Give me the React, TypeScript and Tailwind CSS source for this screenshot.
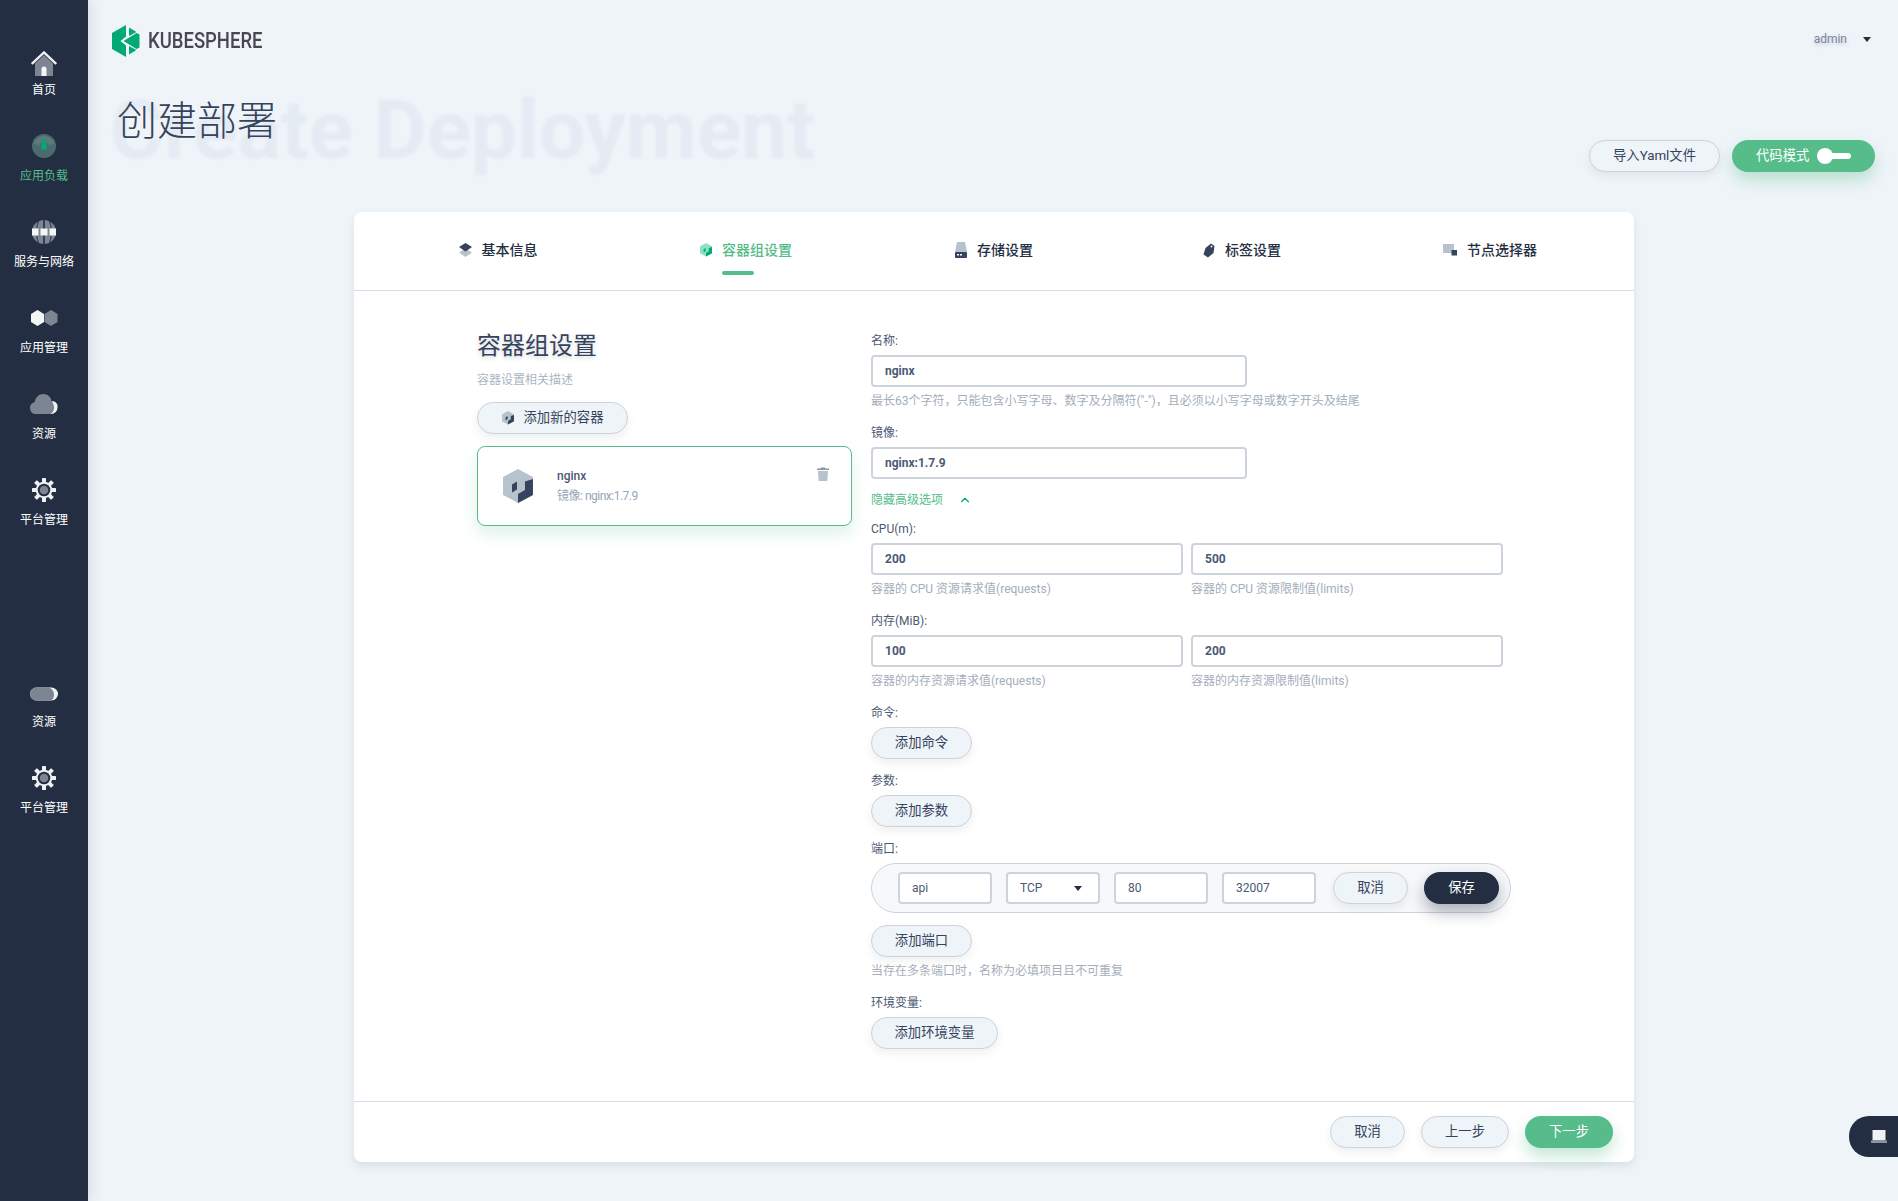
import { ChevronUp } from "lucide-react";
import type { ReactNode } from "react";

function HomeIcon() {
  return (
    <svg width="26" height="26" viewBox="0 0 26 26" className="translate-y-1">
      <path d="M4 12.5 13 4l9 8.500V25H4z" fill="#7e8592" />
      <path d="M0.800 13 13 1.500 25.200 13" fill="none" stroke="#f0f1f3" strokeWidth="2.400" />
      <path d="M10.500 25v-7a2.500 2.500 0 0 1 5 0v7z" fill="#f4f5f6" />
    </svg>
  );
}

function GaugeIcon() {
  return (
    <svg width="24" height="24" viewBox="0 0 24 24">
      <circle cx="12" cy="12" r="12" fill="#4a6b6f" />
      <path d="M1.500 9.500a11 11 0 0 1 21 0l-5.500 2a5.500 5.500 0 0 0-10 0z" fill="#5b7a7d" />
      <path d="M12 3.500c1 3 2.800 6.500 2.800 9.500a2.800 2.800 0 0 1-5.600 0c0-3 1.800-6.500 2.800-9.500z" fill="#00aa72" />
    </svg>
  );
}

function GlobeIcon() {
  return (
    <svg width="24" height="24" viewBox="0 0 24 24">
      <circle cx="12" cy="12" r="12" fill="#7e8592" />
      <path d="M11.200 0h1.600v24h-1.600z" fill="#242e42" />
      <path d="M7 0.500C5.600 3 5 5.500 5 8M17 0.500C18.400 3 19 5.500 19 8M7 23.500C5.600 21 5 18.500 5 16M17 23.500C18.400 21 19 18.500 19 16" stroke="#242e42" strokeWidth="1" fill="none" />
      <path d="M0 8.500h6.500v7H0zM8.500 8.500h7v7h-7zM17.500 8.500H24v7h-6.500z" fill="#f4f5f6" />
    </svg>
  );
}

function HexIcon() {
  return (
    <svg width="28" height="16" viewBox="0 0 28 16">
      <path d="M21 0l6.500 4v8L21 16l-6.500-4V4z" fill="#7e8592" />
      <path d="M7.500 0 14 4v8l-6.500 4L1 12V4z" fill="#f4f5f6" />
    </svg>
  );
}

function CloudIcon() {
  return (
    <svg width="28" height="20" viewBox="0 0 28 20">
      <path d="M21 7.500A5 5 0 0 1 27.500 13a6.500 6.500 0 0 1-6.500 7h-3c3 0 5.500-2 5.500-6 0-2.500-1-5-2.500-6.500z" fill="#f0f1f3" />
      <path d="M6 20a6 6 0 0 1-1.500-11.800C5.500 3.300 9 0 13.500 0c4 0 7.500 3 8 7 1.500 1.500 2.500 4 2.500 6.500 0 4-2.500 6.500-6 6.500z" fill="#7e8592" />
    </svg>
  );
}

function PillIcon() {
  return (
    <svg width="28" height="14" viewBox="0 0 28 14" className="translate-y-0.5">
      <rect x="0" y="0.500" width="28" height="13" rx="6.500" fill="#f0f1f3" />
      <path d="M6.500 0.500h13c3 2 4.500 4 4.500 7 0 2.500-1 4.500-2.500 6h-15a6.500 6.500 0 0 1 0-13z" fill="#7e8592" />
    </svg>
  );
}

function GearIcon() {
  return (
    <svg width="24" height="24" viewBox="0 0 24 24">
      <g fill="#f0f1f3">
        <rect x="10" y="0" width="4" height="24" rx="0.500" />
        <rect x="10" y="0" width="4" height="24" rx="0.500" transform="rotate(45 12 12)" />
        <rect x="10" y="0" width="4" height="24" rx="0.500" transform="rotate(90 12 12)" />
        <rect x="10" y="0" width="4" height="24" rx="0.500" transform="rotate(135 12 12)" />
      </g>
      <circle cx="12" cy="12" r="8.300" fill="#f0f1f3" />
      <circle cx="12" cy="12" r="6.300" fill="#242e42" />
      <circle cx="12" cy="12" r="4.300" fill="#7e8592" />
    </svg>
  );
}

function CubeIcon({ size = 30, dark = "#36435c", light = "#b6c2cd" }: { size?: number; dark?: string; light?: string }) {
  return (
    <svg width={size} height={size * 1.130} viewBox="0 0 30 34">
      <path d="M15 0 30 8v18l-15 8L0 26V8z" fill={light} />
      <path d="M30 10v16l-15 8V25l7-4v-8.500z" fill={dark} />
      <path d="M9 15.500l5-3v8l-5 3z" fill={dark} />
    </svg>
  );
}

function LayersIcon() {
  return (
    <svg width="13" height="16" viewBox="0 0 13 16">
      <path d="M6.500 6.500 13 10.500 6.500 15 0 10.500z" fill="#b6c2cd" />
      <path d="M6.500 1 13 5 6.500 9.500 0 5z" fill="#36435c" />
    </svg>
  );
}

function DiskIcon() {
  return (
    <svg width="12" height="16" viewBox="0 0 12 16">
      <path d="M2 0h8l2 10H0z" fill="#b6c2cd" />
      <rect x="0" y="10" width="12" height="6" rx="1" fill="#36435c" />
      <path d="M2 12h2v1.500H2zM5 12h2v1.500H5z" fill="#fff" />
    </svg>
  );
}

function TagIcon() {
  return (
    <svg width="12" height="15" viewBox="0 0 12 15">
      <path d="M8 0.500 11.500 3l-1 7L5 14.500 0.500 11.500 2.500 5z" fill="#36435c" />
      <circle cx="8.500" cy="3.500" r="0.900" fill="#fff" />
    </svg>
  );
}

function NodeIcon() {
  return (
    <svg width="14" height="12" viewBox="0 0 14 12">
      <rect x="0" y="0" width="11" height="9" fill="#b6c2cd" />
      <rect x="8.500" y="6" width="5.500" height="5.500" fill="#36435c" />
    </svg>
  );
}

function TrashIcon() {
  return (
    <svg width="12" height="14" viewBox="0 0 12 14">
      <path d="M4 0.500h4l0.500 1H12v1.500H0V1.500h3.500z" fill="#8b97a8" />
      <path d="M1 4h10l-0.700 10H1.700z" fill="#b6c2cd" />
    </svg>
  );
}

function Logo() {
  return (
    <svg width="28" height="32" viewBox="0 0 28 32">
      <path d="M0 8 14 0v11.500L8.500 16l5.500 4.500V32L0 24z" fill="#00aa72" />
      <path d="M17 2.500 24.500 7 17 11zM17 21l7.500 4L17 29.500z" fill="#00aa72" />
      <path d="M27.500 9.500v13l-3 1.500L11.500 16l13-8z" fill="#00aa72" />
    </svg>
  );
}

function NavItem({ icon, label, active }: { icon: ReactNode; label: string; active?: boolean }) {
  return (
    <div className="flex h-[86px] flex-col items-center">
      <div className="flex h-6 items-center justify-center">{icon}</div>
      <span className={`mt-2 text-xs leading-5 ${active ? "text-[#55bc8a]" : "text-white"}`}>{label}</span>
    </div>
  );
}

function Button({ children, className = "" }: { children: ReactNode; className?: string }) {
  return (
    <button type="button" className={`flex h-8 items-center justify-center rounded-2xl border border-[#ccd3db] bg-[#eff4f9] text-[13.33px] text-[#36435c] shadow-[0_4px_8px_rgba(36,46,66,0.08)] ${className}`}>
      {children}
    </button>
  );
}

function GreenButton({ children, className = "" }: { children: ReactNode; className?: string }) {
  return (
    <button type="button" className={`flex h-8 items-center rounded-2xl bg-[#55bc8a] text-[13.33px] text-white shadow-[0_8px_16px_rgba(85,188,138,0.36)] ${className}`}>
      {children}
    </button>
  );
}

function Label({ children }: { children: ReactNode }) {
  return <div className="mb-1 h-5 text-xs leading-5 text-[#4a5974]">{children}</div>;
}

function Help({ children }: { children: ReactNode }) {
  return <div className="mt-1 h-5 text-xs leading-5 text-[#a3aebb]">{children}</div>;
}

function Input({ value, className = "" }: { value: string; className?: string }) {
  return (
    <input readOnly value={value} className={`h-8 rounded border-2 border-[#ccd3db] bg-white pl-3 text-xs font-bold text-[#4a5974] outline-none ${className}`} />
  );
}

function PortInput({ value }: { value: string }) {
  return (
    <input readOnly value={value} className="h-8 w-[94px] rounded border-2 border-[#ccd3db] bg-white pl-3 text-xs text-[#4a5974] outline-none" />
  );
}

const tabs = [
  { label: "基本信息", icon: <LayersIcon /> },
  { label: "容器组设置", icon: <CubeIcon size={12} dark="#00aa72" light="#90e0c5" />, active: true },
  { label: "存储设置", icon: <DiskIcon /> },
  { label: "标签设置", icon: <TagIcon /> },
  { label: "节点选择器", icon: <NodeIcon /> },
];

export default function App() {
  return (
    <div className="relative flex h-screen overflow-hidden bg-[#eff4f9] font-['Roboto','Noto_Sans_CJK_SC',sans-serif]">
      <aside className="z-10 w-[88px] shrink-0 bg-[#242e42] pt-12 shadow-[4px_0_12px_rgba(36,46,66,0.1)]">
        <NavItem icon={<HomeIcon />} label="首页" />
        <NavItem icon={<GaugeIcon />} label="应用负载" active />
        <NavItem icon={<GlobeIcon />} label="服务与网络" />
        <NavItem icon={<HexIcon />} label="应用管理" />
        <NavItem icon={<CloudIcon />} label="资源" />
        <NavItem icon={<GearIcon />} label="平台管理" />
        <div className="mt-[116px]">
          <NavItem icon={<PillIcon />} label="资源" />
          <NavItem icon={<GearIcon />} label="平台管理" />
        </div>
      </aside>

      <main className="min-w-0 flex-1">
        <header className="flex h-[92px] items-start justify-between pl-6 pr-[27px] pt-[25px]">
          <div className="flex items-center">
            <Logo />
            <span className="ml-2 origin-left scale-x-[0.84] text-[22px] font-medium leading-8 text-[#4a4553]">KUBESPHERE</span>
          </div>
          <div className="mt-1 flex items-center">
            <span className="text-xs leading-5 text-[#79879c] [text-shadow:0_2px_4px_rgba(36,46,66,0.2)]">admin</span>
            <span className="ml-4 h-0 w-0 border-x-[4.5px] border-t-[5px] border-x-transparent border-t-[#242e42]" />
          </div>
        </header>

        <div className="flex h-[120px] items-start justify-between pl-[29px] pr-[23px]">
          <div className="relative">
            <span className="absolute left-[-7px] top-[-17px] whitespace-nowrap text-[82px] font-bold leading-[110px] text-[#e5ebf3] blur-[1px]">Create Deployment</span>
            <h1 className="relative text-[40px] font-light leading-[60px] text-[#36435c]">创建部署</h1>
          </div>
          <div className="mt-12 flex gap-3">
            <Button className="w-[131px]">导入Yaml文件</Button>
            <GreenButton className="w-[143px] pl-6">
              代码模式
              <span className="ml-2 h-4 w-4 rounded-full bg-white" />
              <span className="ml-[-2px] h-1.5 w-[20px] rounded-r-full bg-white" />
            </GreenButton>
          </div>
        </div>

        <section className="ml-[266px] flex h-[950px] w-[1280px] flex-col rounded-lg bg-white shadow-[0_4px_8px_rgba(36,46,66,0.1)]">
          <div className="grid h-[79px] shrink-0 grid-cols-5 border-b border-[#d5dee7] px-5">
            {tabs.map((tab) => (
              <div key={tab.label} className="relative flex items-center justify-center pb-0.5">
                <div className={`relative flex items-center gap-[10px] text-sm font-medium ${tab.active ? "text-[#55bc8a]" : "text-[#242e42]"}`}>
                  {tab.icon}
                  <span className="relative">
                    {tab.label}
                    {tab.active && <span className="absolute left-0 top-[31px] h-1 w-8 rounded-sm bg-[#55bc8a]" />}
                  </span>
                </div>
              </div>
            ))}
          </div>

          <div className="flex min-h-0 flex-1 gap-[19px] pl-[123px]">
            <div className="w-[375px] shrink-0 pt-[39px]">
              <h2 className="text-2xl font-normal leading-8 text-[#36435c] [text-shadow:0_2px_4px_rgba(36,46,66,0.2)]">容器组设置</h2>
              <p className="mt-2 text-xs leading-5 text-[#abb5c2]">容器设置相关描述</p>
              <Button className="mt-3 w-[151px] gap-2.5">
                <CubeIcon size={12} />
                添加新的容器
              </Button>
              <div className="relative mt-3 flex h-20 items-center rounded-lg border border-[#55bc8a] bg-white pl-[25px] shadow-[0_8px_16px_rgba(85,188,138,0.2)]">
                <CubeIcon />
                <div className="ml-6">
                  <div className="text-xs font-medium leading-5 text-[#4a5974]">nginx</div>
                  <div className="text-xs leading-5 tracking-[-0.5px] text-[#98a5b5]">镜像: nginx:1.7.9</div>
                </div>
                <span className="absolute right-[22px] top-5 flex"><TrashIcon /></span>
              </div>
            </div>

            <div className="min-w-0 flex-1 pt-10">
              <div className="mb-3">
                <Label>名称:</Label>
                <Input value="nginx" className="w-[376px]" />
                <Help>最长63个字符，只能包含小写字母、数字及分隔符("-")，且必须以小写字母或数字开头及结尾</Help>
              </div>
              <div>
                <Label>镜像:</Label>
                <Input value="nginx:1.7.9" className="w-[376px]" />
              </div>
              <div className="mt-[11px] flex h-5 items-center text-xs text-[#55bc8a]">
                隐藏高级选项
                <ChevronUp size={14} strokeWidth={2} className="ml-[15px] text-[#00aa72]" />
              </div>
              <div className="mb-3 mt-[9px]">
                <Label>CPU(m):</Label>
                <div className="flex gap-2">
                  <div className="w-[312px]">
                    <Input value="200" className="w-full" />
                    <Help>容器的 CPU 资源请求值(requests)</Help>
                  </div>
                  <div className="w-[312px]">
                    <Input value="500" className="w-full" />
                    <Help>容器的 CPU 资源限制值(limits)</Help>
                  </div>
                </div>
              </div>
              <div className="mb-3">
                <Label>内存(MiB):</Label>
                <div className="flex gap-2">
                  <div className="w-[312px]">
                    <Input value="100" className="w-full" />
                    <Help>容器的内存资源请求值(requests)</Help>
                  </div>
                  <div className="w-[312px]">
                    <Input value="200" className="w-full" />
                    <Help>容器的内存资源限制值(limits)</Help>
                  </div>
                </div>
              </div>
              <div className="mb-3">
                <Label>命令:</Label>
                <Button className="w-[101px]">添加命令</Button>
              </div>
              <div className="mb-3">
                <Label>参数:</Label>
                <Button className="w-[101px]">添加参数</Button>
              </div>
              <div className="mb-3">
                <Label>端口:</Label>
                <div className="flex h-[50px] w-[640px] items-center rounded-[25px] border border-[#ccd3db] bg-[#f6f8fa] pl-[26px]">
                  <div className="flex gap-[14px]">
                    <PortInput value="api" />
                    <div className="flex h-8 w-[94px] items-center justify-between rounded border-2 border-[#ccd3db] bg-white pl-3 pr-4 text-xs text-[#4a5974]">
                      TCP
                      <span className="h-0 w-0 border-x-[4.5px] border-t-[5px] border-x-transparent border-t-[#242e42]" />
                    </div>
                    <PortInput value="80" />
                    <PortInput value="32007" />
                  </div>
                  <Button className="ml-[17px] w-[75px]">取消</Button>
                  <button type="button" className="ml-4 flex h-8 w-[75px] items-center justify-center rounded-2xl bg-[#242e42] text-[13.33px] text-white shadow-[0_8px_16px_rgba(36,46,66,0.36)]">保存</button>
                </div>
                <Button className="mt-3 w-[101px]">添加端口</Button>
                <Help>当存在多条端口时，名称为必填项目且不可重复</Help>
              </div>
              <div>
                <Label>环境变量:</Label>
                <Button className="w-[127px]">添加环境变量</Button>
              </div>
            </div>
          </div>

          <footer className="flex h-[61px] shrink-0 justify-end gap-4 border-t border-[#d5dee7] pr-[21px] pt-[14px]">
            <Button className="w-[75px]">取消</Button>
            <Button className="w-[88px]">上一步</Button>
            <GreenButton className="w-[88px] justify-center">下一步</GreenButton>
          </footer>
        </section>
      </main>

      <div className="absolute right-0 top-[1116px] flex h-[41px] w-[49px] items-center rounded-l-[20px] bg-[#242e42] pl-[22px]">
        <svg width="16" height="13" viewBox="0 0 16 13">
          <rect x="1.500" y="0" width="13" height="10.500" fill="#f0f1f3" />
          <rect x="0" y="10.500" width="16" height="2.500" fill="#8b93a1" />
        </svg>
      </div>
    </div>
  );
}
